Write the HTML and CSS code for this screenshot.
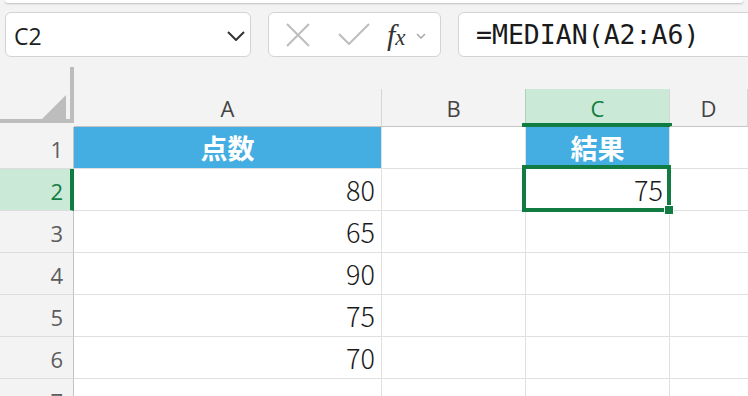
FILE: index.html
```html
<!DOCTYPE html>
<html lang="ja">
<head>
<meta charset="utf-8">
<title>MEDIAN</title>
<link rel="stylesheet" href="styles.css">
</head>
<body>
<div class="topbar"></div>
<div class="toolbar">
  <div class="namebox">
    <span class="name">C2</span>
    <svg class="chev" width="18" height="10" viewBox="0 0 18 10"><polyline points="1,1 9,9 17,1" fill="none" stroke="#333" stroke-width="2"/></svg>
  </div>
  <div class="funcbox">
    <svg class="ic-x" width="24" height="24" viewBox="0 0 24 24"><path d="M1 1 L23 23 M23 1 L1 23" stroke="#bdbdbd" stroke-width="2" fill="none"/></svg>
    <svg class="ic-check" width="32" height="22" viewBox="0 0 32 22"><polyline points="1,11 11,21 31,1" fill="none" stroke="#bdbdbd" stroke-width="2"/></svg>
    <span class="fx"><span class="fx-f">f</span><span class="fx-x">x</span></span>
    <svg class="ic-small" width="10" height="6" viewBox="0 0 10 6"><polyline points="1,1 5,5 9,1" fill="none" stroke="#aaa" stroke-width="1.5"/></svg>
  </div>
  <div class="formulabox"><span class="formula">=MEDIAN(A2:A6)</span></div>
</div>

<div class="sheet">
  <div class="colheads">
    <div class="corner"><div class="tri"></div></div>
    <div class="ch col-a">A</div>
    <div class="ch col-b">B</div>
    <div class="ch col-c selected">C<span class="selbar"></span></div>
    <div class="ch col-d">D</div>
  </div>

  <div class="row">
    <div class="rh">1</div>
    <div class="cell col-a head">点数</div>
    <div class="cell col-b"></div>
    <div class="cell col-c head">結果</div>
    <div class="cell col-d"></div>
  </div>
  <div class="row">
    <div class="rh active">2</div>
    <div class="cell col-a num">80</div>
    <div class="cell col-b"></div>
    <div class="cell col-c num current">75<span class="selbox"></span><span class="handle"></span></div>
    <div class="cell col-d"></div>
  </div>
  <div class="row">
    <div class="rh">3</div>
    <div class="cell col-a num">65</div>
    <div class="cell col-b"></div>
    <div class="cell col-c"></div>
    <div class="cell col-d"></div>
  </div>
  <div class="row">
    <div class="rh">4</div>
    <div class="cell col-a num">90</div>
    <div class="cell col-b"></div>
    <div class="cell col-c"></div>
    <div class="cell col-d"></div>
  </div>
  <div class="row">
    <div class="rh">5</div>
    <div class="cell col-a num">75</div>
    <div class="cell col-b"></div>
    <div class="cell col-c"></div>
    <div class="cell col-d"></div>
  </div>
  <div class="row">
    <div class="rh">6</div>
    <div class="cell col-a num">70</div>
    <div class="cell col-b"></div>
    <div class="cell col-c"></div>
    <div class="cell col-d"></div>
  </div>
  <div class="row">
    <div class="rh">7</div>
    <div class="cell col-a"></div>
    <div class="cell col-b"></div>
    <div class="cell col-c"></div>
    <div class="cell col-d"></div>
  </div>
</div>
</body>
</html>
```

FILE: styles.css
```css
* { box-sizing: border-box; }

html, body {
  margin: 0;
  padding: 0;
  width: 748px;
  height: 396px;
  overflow: hidden;
  background: #f3f3f3;
  font-family: "Open Sans", "Noto Sans", sans-serif;
}

.topbar {
  height: 3px;
  margin: 0 5px;
  background: #fff;
  border-radius: 0 0 8px 8px;
  box-shadow: 0 1px 2px rgba(0,0,0,0.22);
}

.toolbar {
  display: flex;
  margin-top: 9px;
  height: 45px;
  padding-left: 5px;
}

.namebox {
  width: 246px;
  height: 45px;
  background: #fff;
  border: 1px solid #d3d3d3;
  border-radius: 6px;
  display: flex;
  align-items: center;
  justify-content: space-between;
  padding: 0 5px 0 8px;
}

.name {
  font-size: 23px;
  color: #1e1e1e;
  padding-top: 3px;
}

.chev { margin-top: 2px; }

.funcbox {
  margin-left: 17px;
  width: 173px;
  height: 45px;
  background: #fff;
  border: 1px solid #d3d3d3;
  border-radius: 6px;
  display: flex;
  align-items: center;
  padding-left: 17px;
}

.ic-check { margin-left: 28px; margin-top: -2px; }

.fx {
  margin-left: 17px;
  color: #333;
  font-family: "Liberation Serif", "DejaVu Serif", serif;
  font-style: italic;
  display: flex;
  align-items: baseline;
}
.fx-f { font-size: 30px; }
.fx-x { font-size: 23px; margin-left: 0; }

.ic-small { margin-left: 10px; margin-top: 2px; }

.formulabox {
  margin-left: 17px;
  flex: 1;
  margin-right: -20px;
  height: 45px;
  background: #fff;
  border: 1px solid #d3d3d3;
  border-radius: 6px;
  display: flex;
  align-items: center;
  padding-left: 17px;
}

.formula {
  font-family: "DejaVu Sans Mono", "Liberation Mono", monospace;
  font-size: 26.5px;
  color: #1a1a1a;
}

/* sheet */
.sheet { margin-top: 10px; }

.colheads {
  display: flex;
  align-items: flex-end;
}

.corner {
  width: 74px;
  height: 56px;
  margin-bottom: 4px;
  border-right: 4px solid #bdbdbd;
  border-bottom: 4px solid #bdbdbd;
  display: flex;
  justify-content: flex-end;
  align-items: flex-end;
  padding-right: 4px;
}

.tri {
  width: 24px;
  height: 24px;
  background: #bdbdbd;
  clip-path: polygon(100% 0, 100% 100%, 0 100%);
}

.ch {
  height: 38px;
  border-right: 1px solid #d6d6d6;
  border-bottom: 1px solid #c4c4c4;
  display: flex;
  align-items: center;
  justify-content: center;
  font-size: 22px;
  color: #444;
  position: relative;
}

.col-a { width: 308px; }
.col-b { width: 144px; }
.col-c { width: 144px; }
.col-d { flex: 1; }

.ch.col-b { border-right-color: #a9d6bb; }

.ch.selected {
  background: #cae9d6;
  color: #107c41;
}

.selbar {
  position: absolute;
  left: -4px;
  right: -3px;
  bottom: -1px;
  height: 4px;
  background: #107c41;
}

.row {
  display: flex;
  height: 42px;
}

.rh {
  width: 74px;
  height: 42px;
  border-right: 1px solid #c4c4c4;
  border-bottom: 1px solid #dcdcdc;
  display: flex;
  align-items: center;
  justify-content: flex-end;
  padding: 3px 10px 0 0;
  font-size: 22px;
  color: #5c5c5c;
}

.rh.active {
  background: #cae9d6;
  color: #107c41;
  border-right: 4px solid #107c41;
  padding-right: 7px;
}

.cell {
  height: 42px;
  background: #fff;
  border-right: 1px solid #e0e0e0;
  border-bottom: 1px solid #e0e0e0;
  display: flex;
  align-items: center;
  position: relative;
  font-family: "Noto Sans CJK JP", sans-serif;
}

.cell.col-d { border-right: none; }

.cell.head {
  background: #44ade1;
  color: #fff;
  justify-content: center;
  font-size: 27px;
  font-weight: 700;
}

.cell.num {
  justify-content: flex-end;
  padding-right: 6px;
  font-size: 27px;
  color: #1a1a1a;
  font-weight: 300;
}

.cell.current { z-index: 2; }

.selbox {
  position: absolute;
  top: -4px;
  left: -4px;
  right: -2px;
  bottom: -2px;
  border: 4px solid #107c41;
}

.handle {
  position: absolute;
  right: -5px;
  bottom: -5px;
  width: 10px;
  height: 10px;
  background: #107c41;
  border: 1px solid #fff;
}
```
